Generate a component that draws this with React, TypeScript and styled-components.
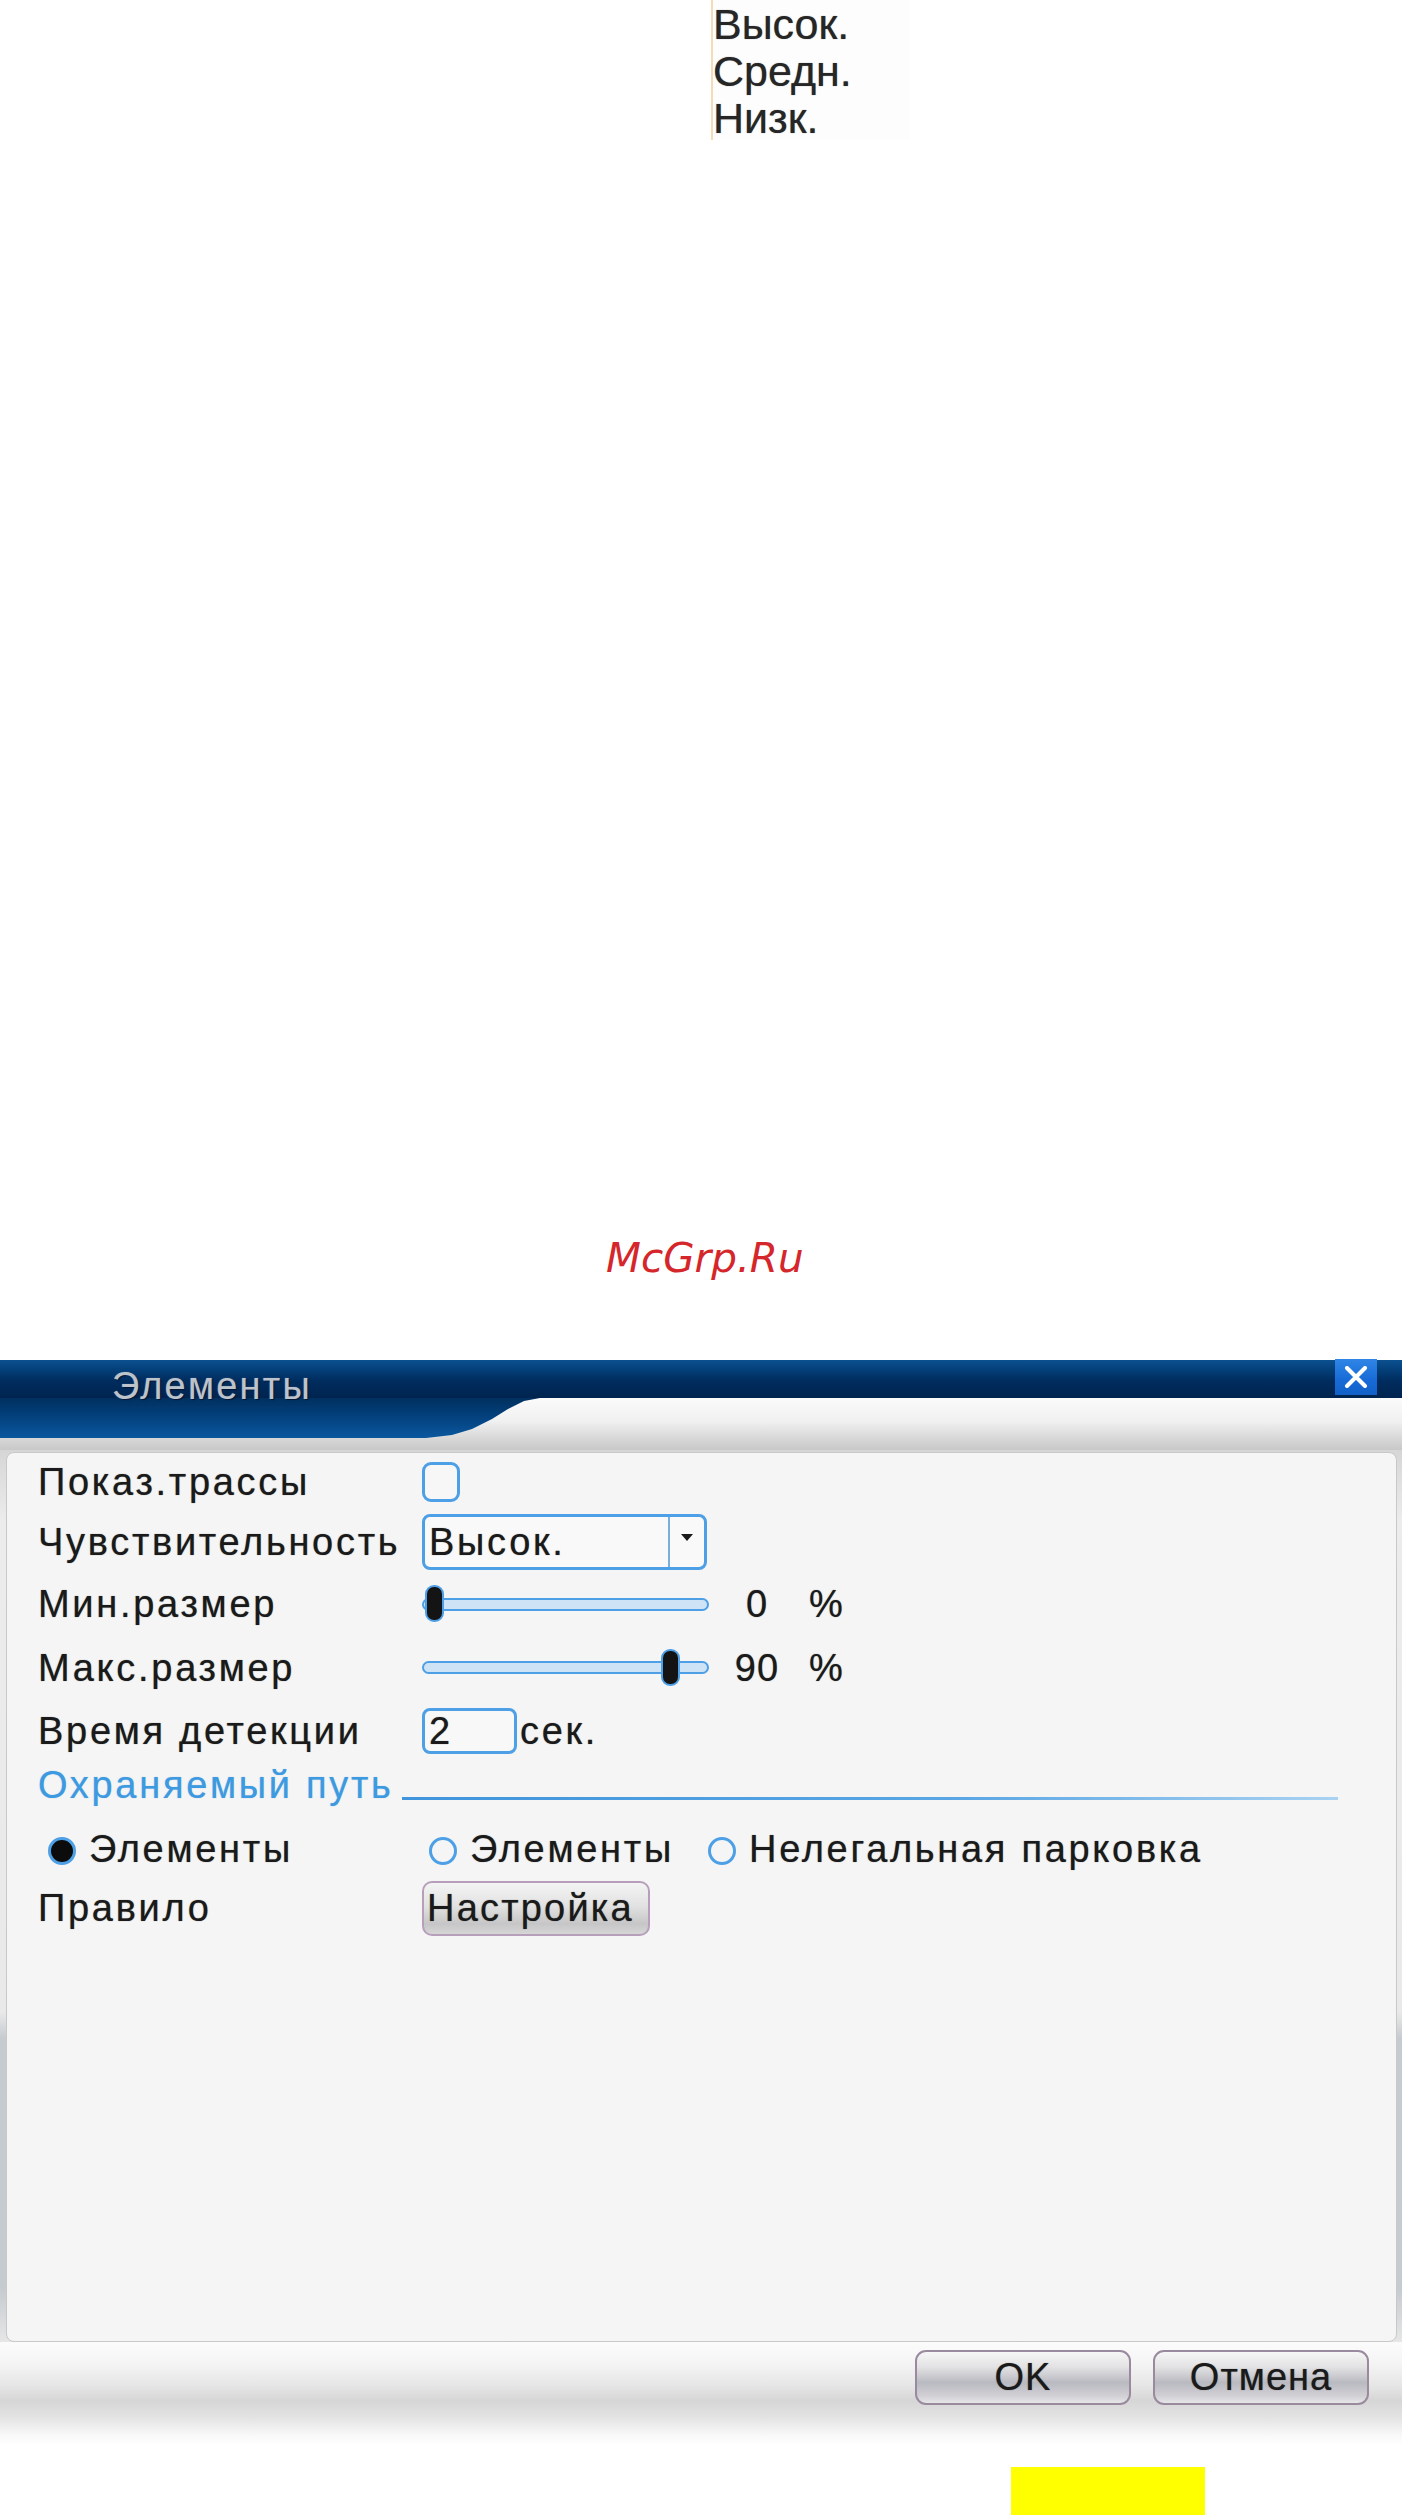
import React from 'react';
import styled, { createGlobalStyle } from 'styled-components';

const GlobalStyle = createGlobalStyle`
    html, body {
        margin: 0;
        padding: 0;
        background: #ffffff;
    }
    body {
        font-family: "Liberation Sans", Arial, sans-serif;
        color: #1c1c1c;
    }
`;

const levels = ['Высок.', 'Средн.', 'Низк.'];

const App = () => {
    return (
        <Page>
            <GlobalStyle />
            <LevelList>
                {levels.map((level) => (
                    <LevelItem key={level}>{level}</LevelItem>
                ))}
            </LevelList>

            <Watermark>McGrp.Ru</Watermark>

            <Dialog>
                <TitleRow>
                    <Title>Элементы</Title>
                    <CloseButton aria-label="close">
                        <svg width="26" height="22" viewBox="0 0 26 22">
                            <path d="M4 2 L22 20 M22 2 L4 20" stroke="#ffffff" strokeWidth="4" strokeLinecap="round" />
                        </svg>
                    </CloseButton>
                </TitleRow>
                <Band>
                    <Tab />
                </Band>

                <Body>
                    <Panel>
                        <Row $h={58}>
                            <Label>Показ.трассы</Label>
                            <Checkbox />
                        </Row>
                        <Row $h={61}>
                            <Label>Чувствительность</Label>
                            <Select>
                                <SelectValue>Высок.</SelectValue>
                                <SelectArrow>
                                    <svg width="12" height="8" viewBox="0 0 12 8">
                                        <path d="M0 0 H12 L6 7 Z" fill="#1a1a1a" />
                                    </svg>
                                </SelectArrow>
                            </Select>
                        </Row>
                        <Row $h={64}>
                            <Label>Мин.размер</Label>
                            <Slider value={0} />
                            <Value>0</Value>
                            <Percent>%</Percent>
                        </Row>
                        <Row $h={63}>
                            <Label>Макс.размер</Label>
                            <Slider value={90} />
                            <Value>90</Value>
                            <Percent>%</Percent>
                        </Row>
                        <Row $h={63}>
                            <Label>Время детекции</Label>
                            <Field>2</Field>
                            <Unit>сек.</Unit>
                        </Row>
                        <Section>
                            <SectionTitle>Охраняемый путь</SectionTitle>
                            <SectionLine />
                        </Section>
                        <RadioRow>
                            <RadioOption $pad={10}>
                                <Radio $checked />
                                Элементы
                            </RadioOption>
                            <RadioOption $pad={7}>
                                <Radio />
                                Элементы
                            </RadioOption>
                            <RadioOption $pad={0}>
                                <Radio />
                                Нелегальная парковка
                            </RadioOption>
                        </RadioRow>
                        <Row $h={58} $baseline>
                            <Label>Правило</Label>
                            <SetupButton>Настройка</SetupButton>
                        </Row>
                    </Panel>
                </Body>

                <Footer>
                    <DialogButton>OK</DialogButton>
                    <DialogButton>Отмена</DialogButton>
                </Footer>
            </Dialog>

            <Marker />
        </Page>
    );
};

const Slider = ({ value }: { value: number }) => (
    <SliderBox>
        <Track />
        <Thumb style={{ left: `${3 + value * 2.62}px` }} />
    </SliderBox>
);

export default App;

const inkShadow = '0 0 1px rgba(0, 0, 0, 0.55)';

const Page = styled.div`
    width: 1402px;
    height: 2515px;
    overflow: hidden;
    display: flex;
    flex-direction: column;
`;

const LevelList = styled.ul`
    list-style: none;
    margin: 0 0 0 711px;
    padding: 1px 0 0;
    width: 199px;
    height: 140px;
    box-sizing: border-box;
    background: #fdfdfd;
    border-left: 2px solid #f3dcb8;
    font-size: 43px;
    color: #262626;
    text-shadow: ${inkShadow};
`;

const LevelItem = styled.li`
    height: 47px;
    line-height: 47px;
`;

const Watermark = styled.div`
    margin-top: 1094px;
    padding-left: 606px;
    height: 48px;
    font-family: "DejaVu Sans", sans-serif;
    font-style: italic;
    font-size: 40.5px;
    line-height: 48px;
    color: #d5272b;
`;

const Dialog = styled.section`
    margin-top: 78px;
    display: flex;
    flex-direction: column;
`;

const TitleRow = styled.header`
    position: relative;
    z-index: 1;
    height: 38px;
    box-sizing: border-box;
    display: flex;
    justify-content: space-between;
    align-items: flex-start;
    padding: 0 25px 0 112px;
    background: linear-gradient(180deg, #0c5190 0%, #04407a 25%, #002c5e 55%, #00244f 100%);
`;

const Title = styled.h1`
    margin: 0;
    padding-top: 7px;
    font-size: 38px;
    line-height: 1;
    font-weight: normal;
    letter-spacing: 2.2px;
    color: #bcc3cc;
    text-shadow: 1px 1px 1px #001634, 0 0 1px rgba(200, 210, 220, 0.6);
`;

const CloseButton = styled.button`
    width: 42px;
    height: 36px;
    margin: -1px 0 0;
    padding: 0;
    border: none;
    background: linear-gradient(180deg, #2f86e6 0%, #176ad6 60%, #1260c8 100%);
    display: flex;
    align-items: center;
    justify-content: center;
`;

const Band = styled.div`
    height: 52px;
    display: flex;
    background: linear-gradient(180deg, #fbfbfb 0%, #f0f0f0 45%, #d6d6d6 80%, #c8c8c8 100%);
`;

const Tab = styled.div`
    width: 540px;
    height: 40px;
    background: linear-gradient(180deg, #00305f 0%, #03407c 45%, #0a589f 100%);
    clip-path: polygon(
        0 0,
        540px 0,
        524px 3px,
        508px 11px,
        492px 21px,
        472px 31px,
        452px 37px,
        426px 40px,
        0 40px
    );
`;

const Body = styled.div`
    padding: 2px 5px 0 6px;
    background: linear-gradient(
        180deg,
        #d6d6d6 0%,
        #ececec 8%,
        #e9e9e9 63%,
        #c6cbd0 66%,
        #c6cbd0 94%,
        #e6e6e6 100%
    );
`;

const Panel = styled.div`
    height: 890px;
    box-sizing: border-box;
    border: 1px solid #c8c8c8;
    border-radius: 8px;
    background: #f5f5f5;
    padding: 0 0 0 31px;
    display: flex;
    flex-direction: column;
    font-size: 38px;
    letter-spacing: 2.7px;
    color: #1a1a1a;
    text-shadow: ${inkShadow};
`;

const Row = styled.div<{ $h: number; $baseline?: boolean }>`
    height: ${(p) => p.$h}px;
    flex-shrink: 0;
    display: flex;
    align-items: ${(p) => (p.$baseline ? 'baseline' : 'center')};
    padding-top: ${(p) => (p.$baseline ? '2px' : '0')};
    box-sizing: border-box;
    line-height: 1;
`;

const Label = styled.span`
    width: 384px;
    flex-shrink: 0;
    white-space: nowrap;
`;

const blueBorder = '3px solid #4d9fe6';

const Checkbox = styled.span`
    width: 38px;
    height: 40px;
    box-sizing: border-box;
    border: ${blueBorder};
    border-radius: 9px;
    background: #f7f7f7;
`;

const Select = styled.div`
    width: 285px;
    height: 56px;
    box-sizing: border-box;
    border: ${blueBorder};
    border-radius: 8px;
    background: #f9f9f9;
    display: flex;
    align-items: center;
`;

const SelectValue = styled.span`
    flex: 1;
    padding-left: 4px;
`;

const SelectArrow = styled.span`
    width: 36px;
    align-self: stretch;
    border-left: 2px solid #7aaedc;
    display: flex;
    align-items: center;
    justify-content: center;
    padding-bottom: 8px;
    box-sizing: border-box;
`;

const SliderBox = styled.div`
    position: relative;
    width: 287px;
    height: 38px;
    display: flex;
    align-items: center;
`;

const Track = styled.div`
    width: 100%;
    height: 13px;
    box-sizing: border-box;
    border: 2px solid #4d9fe6;
    border-radius: 7px;
    background: #cfe3f6;
`;

const Thumb = styled.div`
    position: absolute;
    top: 0;
    width: 19px;
    height: 37px;
    box-sizing: border-box;
    border: 2px solid #4d9fe6;
    border-radius: 9px;
    background: #141414;
`;

const Value = styled.span`
    width: 70px;
    margin-left: 13px;
    text-align: center;
    letter-spacing: 1px;
`;

const Percent = styled.span`
    margin-left: 17px;
`;

const Field = styled.div`
    width: 95px;
    height: 46px;
    box-sizing: border-box;
    border: ${blueBorder};
    border-radius: 8px;
    background: #f8f8f8;
    display: flex;
    align-items: center;
    padding-left: 4px;
`;

const Unit = styled.span`
    margin-left: 3px;
`;

const Section = styled.div`
    height: 46px;
    flex-shrink: 0;
    display: flex;
    align-items: center;
    line-height: 1;
`;

const SectionTitle = styled.span`
    color: #3d9ae0;
    white-space: nowrap;
    text-shadow: 0 0 1px rgba(40, 130, 210, 0.5);
`;

const SectionLine = styled.div`
    flex: 1;
    height: 3px;
    margin: 27px 58px 0 8px;
    background: linear-gradient(90deg, #3f94dc 0%, #5aa6e4 60%, #a9d2f2 100%);
`;

const RadioRow = styled.div`
    height: 60px;
    margin-top: 11px;
    flex-shrink: 0;
    display: grid;
    grid-template-columns: 384px 286px auto;
    align-items: center;
    line-height: 1;
`;

const RadioOption = styled.label<{ $pad: number }>`
    display: flex;
    align-items: center;
    gap: 13px;
    padding-left: ${(p) => p.$pad}px;
    white-space: nowrap;
`;

const Radio = styled.span<{ $checked?: boolean }>`
    width: 28px;
    height: 28px;
    flex-shrink: 0;
    box-sizing: border-box;
    border-radius: 50%;
    border: 3px solid #4d9fe6;
    background: ${(p) => (p.$checked ? '#0c0c0c' : 'transparent')};
    margin-top: 3px;
`;

const SetupButton = styled.button`
    width: 228px;
    height: 55px;
    padding: 0 0 0 3px;
    box-sizing: border-box;
    border: 2px solid #b79fbb;
    border-radius: 10px;
    background: linear-gradient(180deg, #f4f4f4 0%, #e2e2e2 45%, #c6c6c8 80%, #d6d6d6 100%);
    font-family: "Liberation Sans", Arial, sans-serif;
    font-size: 38px;
    letter-spacing: 2.2px;
    color: #1a1a1a;
    text-shadow: ${inkShadow};
    text-align: left;
    white-space: nowrap;
`;

const Footer = styled.footer`
    height: 103px;
    box-sizing: border-box;
    display: flex;
    justify-content: flex-end;
    align-items: flex-start;
    gap: 22px;
    padding: 8px 33px 0 0;
    background: linear-gradient(
        180deg,
        #fbfbfb 0%,
        #f5f5f5 20%,
        #e6e6e6 42%,
        #d6d6d6 57%,
        #e4e4e4 74%,
        #f8f8f8 90%,
        #ffffff 100%
    );
`;

const DialogButton = styled.button`
    width: 216px;
    height: 55px;
    box-sizing: border-box;
    border: 2px solid #9a8a9e;
    border-radius: 11px;
    background: linear-gradient(180deg, #f6f6f6 0%, #e2e2e4 30%, #b9b9c1 60%, #cfcfd4 85%, #e6e6e8 100%);
    font-family: "Liberation Sans", Arial, sans-serif;
    font-size: 38px;
    letter-spacing: 1px;
    color: #1a1a1a;
    text-shadow: ${inkShadow};
    padding: 0;
`;

const Marker = styled.div`
    margin: 22px 0 0 1011px;
    width: 194px;
    height: 48px;
    background: #ffff00;
`;
